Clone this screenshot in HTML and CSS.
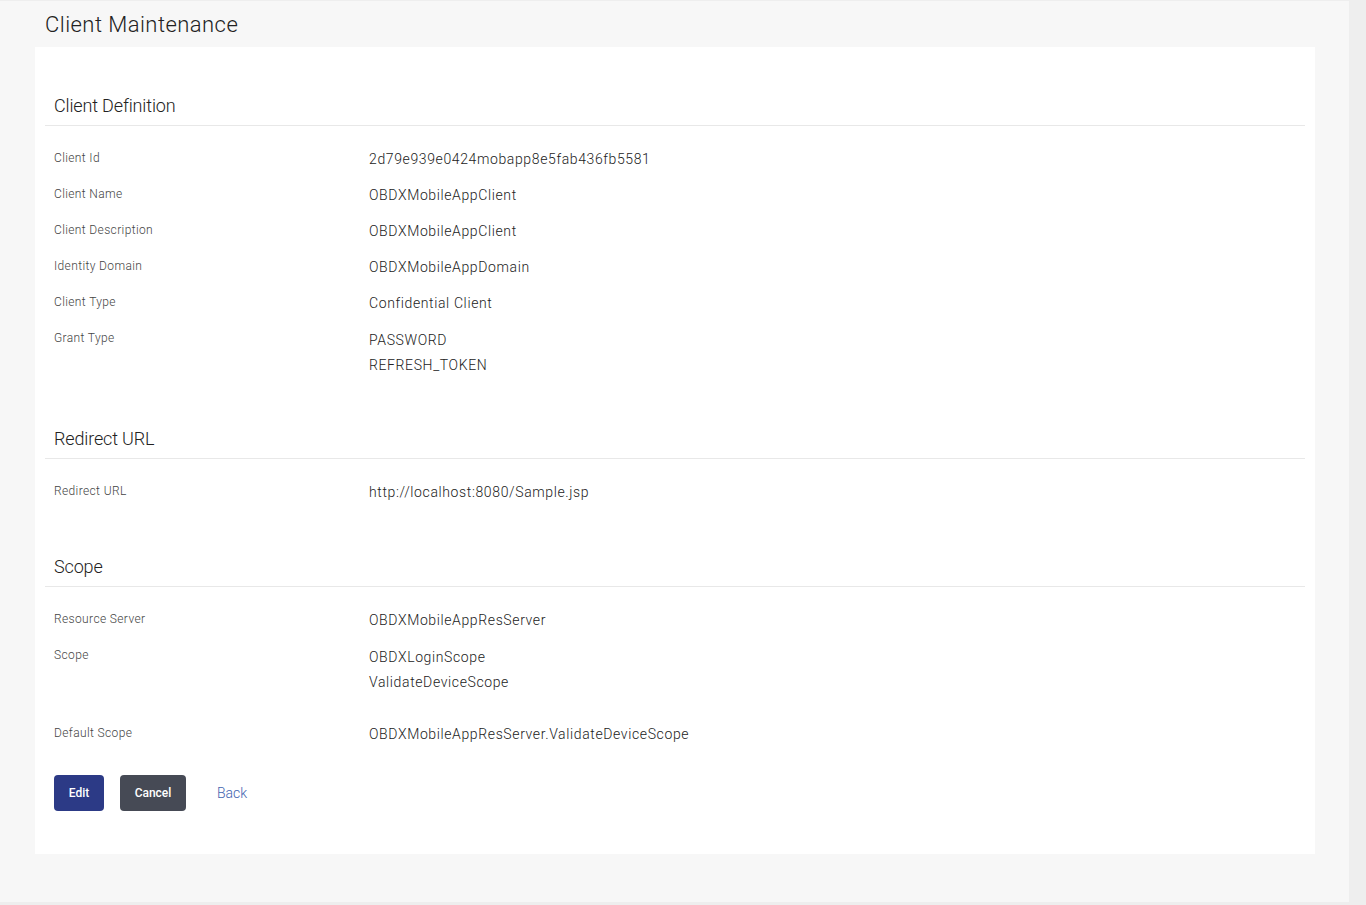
FILE: index.html
```html
<!DOCTYPE html>
<html lang="en">
<head>
    <meta charset="UTF-8">
    <meta name="viewport" content="width=device-width, initial-scale=1.0">
    <title>Client Maintenance</title>
    <link rel="stylesheet" href="styles.css">
</head>
<body>
    <div class="page">
        <h1 class="page-title">Client Maintenance</h1>

        <div class="card">
            <section class="section">
                <h2 class="section-title">Client Definition</h2>
                <div class="section-body">
                    <div class="row">
                        <div class="label">Client Id</div>
                        <div class="value">2d79e939e0424mobapp8e5fab436fb5581</div>
                    </div>
                    <div class="row">
                        <div class="label">Client Name</div>
                        <div class="value">OBDXMobileAppClient</div>
                    </div>
                    <div class="row">
                        <div class="label">Client Description</div>
                        <div class="value">OBDXMobileAppClient</div>
                    </div>
                    <div class="row">
                        <div class="label">Identity Domain</div>
                        <div class="value">OBDXMobileAppDomain</div>
                    </div>
                    <div class="row">
                        <div class="label">Client Type</div>
                        <div class="value">Confidential Client</div>
                    </div>
                    <div class="row">
                        <div class="label">Grant Type</div>
                        <div class="value value-list">
                            <div>PASSWORD</div>
                            <div>REFRESH_TOKEN</div>
                        </div>
                    </div>
                </div>
            </section>

            <section class="section">
                <h2 class="section-title">Redirect URL</h2>
                <div class="section-body">
                    <div class="row">
                        <div class="label">Redirect URL</div>
                        <div class="value">http://localhost:8080/Sample.jsp</div>
                    </div>
                </div>
            </section>

            <section class="section">
                <h2 class="section-title">Scope</h2>
                <div class="section-body">
                    <div class="row">
                        <div class="label">Resource Server</div>
                        <div class="value">OBDXMobileAppResServer</div>
                    </div>
                    <div class="row row-multi">
                        <div class="label">Scope</div>
                        <div class="value value-list">
                            <div>OBDXLoginScope</div>
                            <div>ValidateDeviceScope</div>
                        </div>
                    </div>
                    <div class="row">
                        <div class="label">Default Scope</div>
                        <div class="value">OBDXMobileAppResServer.ValidateDeviceScope</div>
                    </div>
                </div>
            </section>

            <div class="actions">
                <button type="button" class="btn btn-primary">Edit</button>
                <button type="button" class="btn btn-secondary">Cancel</button>
                <a href="#" class="link-back">Back</a>
            </div>
        </div>
    </div>
</body>
</html>
```

FILE: styles.css
```css
* {
    box-sizing: border-box;
}

body {
    margin: 0;
    background: #eeeeee;
    font-family: Roboto, "Liberation Sans", Arial, sans-serif;
    color: #333333;
}

.page {
    width: 1349px;
    height: 901px;
    margin-top: 1px;
    background: #f7f7f7;
    padding: 9px 34px 0 35px;
}

.page-title {
    margin: 0 0 7px 10px;
    font-size: 22px;
    line-height: 30px;
    font-weight: 300;
    letter-spacing: 0.45px;
    color: #222222;
}

.card {
    background: #ffffff;
    padding: 8px 10px 43px 10px;
}

.section-title {
    margin: 0;
    padding: 39px 9px 7px 9px;
    font-size: 18px;
    line-height: 24px;
    font-weight: 300;
    letter-spacing: -0.15px;
    color: #222222;
    border-bottom: 1px solid #e8e8e8;
}

.section-body {
    padding: 21px 9px 0 9px;
}

.row {
    display: flex;
    align-items: flex-start;
    min-height: 26px;
    padding-top: 1px;
    margin-bottom: 10px;
}

.row-multi {
    margin-bottom: 27px;
}

.label {
    width: 315px;
    flex-shrink: 0;
    font-size: 12px;
    line-height: 20px;
    font-weight: 300;
    letter-spacing: 0.37px;
    color: #444444;
}

.value {
    font-size: 14px;
    line-height: 22px;
    font-weight: 300;
    letter-spacing: 0.62px;
    color: #222222;
}

.value-list {
    line-height: 25px;
}

.actions {
    display: flex;
    align-items: center;
    gap: 16px;
    padding: 17px 9px 0 9px;
}

.btn {
    height: 36px;
    border: none;
    border-radius: 4px;
    padding: 0 10px;
    font-family: inherit;
    font-size: 12px;
    font-weight: 500;
    color: #ffffff;
    cursor: pointer;
}

.btn-primary {
    background: #2c3a86;
    width: 50px;
}

.btn-secondary {
    background: #464a55;
    width: 66px;
}

.link-back {
    margin-left: 15px;
    font-size: 14px;
    font-weight: 300;
    color: #3f64b0;
    text-decoration: none;
}
```
